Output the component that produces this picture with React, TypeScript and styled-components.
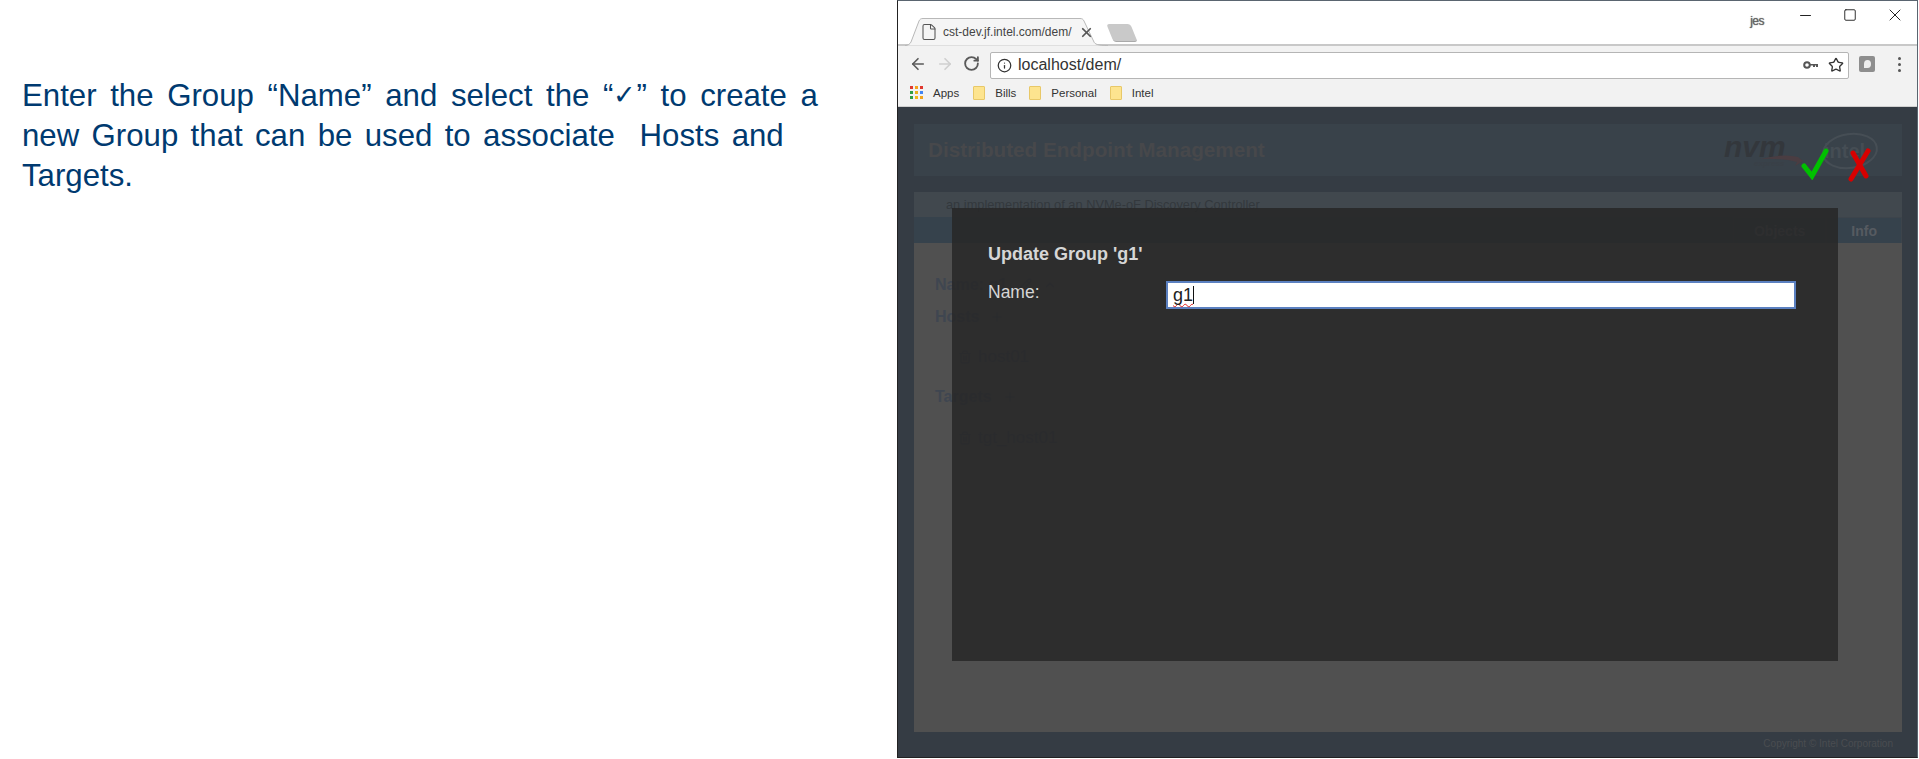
import React from "react";
import styled, { createGlobalStyle } from "styled-components";
import { ArrowLeft, ArrowRight, RotateCw, Info, Star, File, X, Minus, Square, Plus, Trash2, Pencil, ChevronUp } from "lucide-react";

const GlobalStyle = createGlobalStyle`
  html, body { margin: 0; padding: 0; background: #fff; overflow: hidden; }
  body { font-family: "Liberation Sans", Arial, sans-serif; }
`;

const StyledRoot = styled.div`
  width: 1919px;
  height: 759px;
  display: flex;
  background: #fff;
  overflow: hidden;
`;

const StyledNotes = styled.div`
  width: 897px;
  flex: none;
  padding: 75px 0 0 22px;
  box-sizing: border-box;
  color: #003a70;
  font-size: 31.2px;
  line-height: 40px;
`;

const StyledLine = styled.div<{ $spacing: number }>`
  white-space: pre;
  word-spacing: ${(p) => p.$spacing}px;
`;

const StyledCheckGlyph = styled.span`
  font-size: 27px;
  font-weight: normal;
  vertical-align: 2px;
`;

const StyledWindow = styled.div`
  width: 1021px;
  height: 758px;
  border: 1px solid #5a6570;
  border-bottom-color: #222;
  border-left-color: #222;
  box-sizing: border-box;
  display: flex;
  flex-direction: column;
  position: relative;
  background: #fff;
`;

const StyledTabStrip = styled.div`
  height: 45px;
  flex: none;
  display: flex;
  align-items: flex-end;
  padding-left: 7px;
  box-sizing: border-box;
  border-bottom: 2px solid #c8c8c8;
  position: relative;
`;

const StyledTab = styled.div`
  width: 203px;
  height: 28px;
  margin-bottom: -2px;
  flex: none;
  box-sizing: border-box;
  display: flex;
  align-items: center;
  padding-left: 15px;
  font-size: 12px;
  color: #444;
  position: relative;
`;

const StyledTabShape = styled.svg`
  position: absolute;
  left: 0;
  top: 0;
  z-index: 0;
`;

const StyledTabFile = styled(File)`
  flex: none;
  position: relative;
  color: #555;
`;

const StyledTabTitle = styled.span`
  margin: 0 6px 0 5px;
  width: 130px;
  flex: none;
  white-space: nowrap;
  position: relative;
`;

const StyledTabClose = styled(X)`
  flex: none;
  position: relative;
  color: #555;
`;

const StyledNewTab = styled.div`
  width: 24px;
  height: 17px;
  margin: 0 0 2px 2px;
  flex: none;
  background: #c9c9c9;
  border-bottom: 1px solid #aaa;
  border-radius: 3px;
  transform: skewX(22deg);
`;

const StyledWindowControls = styled.div`
  position: absolute;
  top: 4px;
  right: 12px;
  display: flex;
  align-items: center;
  gap: 28.5px;
  color: #222;
`;

const StyledProfile = styled.span`
  position: absolute;
  top: 13px;
  right: 153px;
  font-size: 12px;
  letter-spacing: -0.5px;
  color: #666;
  text-shadow: 0 0 1px #555;
`;

const StyledToolbar = styled.div`
  height: 33px;
  flex: none;
  background: #f2f2f2;
  display: flex;
  align-items: center;
  padding: 0 11px;
  box-sizing: border-box;
  color: #5a5a5a;
`;

const StyledNavIcons = styled.div`
  display: flex;
  align-items: center;
  gap: 9px;
  width: 81px;
  flex: none;
  margin-top: 2px;
`;

const StyledUrlBox = styled.div`
  width: 859px;
  height: 27px;
  flex: none;
  margin-top: 5px;
  box-sizing: border-box;
  background: #fff;
  border: 1px solid #b5b5b5;
  border-radius: 2px;
  display: flex;
  align-items: center;
  padding: 0 4px 0 6px;
  gap: 6px;
  font-size: 16px;
  color: #333;
`;

const StyledUrlText = styled.span`
  flex: 1;
`;

const StyledBookmarkStar = styled(Star)`
  margin-left: 3px;
`;

const StyledExtension = styled.div`
  width: 16px;
  height: 16px;
  margin: 3px 0 0 10px;
  border-radius: 2px;
  background: #8e8e8e;
  display: flex;
  align-items: center;
  justify-content: center;
`;

const StyledExtensionMark = styled.div`
  width: 7px;
  height: 8px;
  background: #eee;
  border-radius: 50% 50% 50% 0;
`;

const StyledMenu = styled.div`
  margin: 3px 0 0 23px;
  display: flex;
  flex-direction: column;
  gap: 3px;
`;

const StyledMenuDot = styled.div`
  width: 3px;
  height: 3px;
  border-radius: 50%;
  background: #555;
`;

const StyledBookmarks = styled.div`
  height: 28px;
  flex: none;
  background: #f2f2f2;
  border-bottom: 1px solid #d0d0d0;
  box-sizing: border-box;
  display: flex;
  align-items: center;
  padding-left: 12px;
  font-size: 11.5px;
  color: #333;
`;

const StyledBookmark = styled.div<{ $gap: number }>`
  display: flex;
  align-items: center;
  gap: 10px;
  margin-right: ${(p) => p.$gap}px;
`;

const StyledAppsGrid = styled.div`
  display: grid;
  grid-template-columns: repeat(3, 3px);
  grid-auto-rows: 3px;
  gap: 2px;
`;

const StyledAppsDot = styled.div<{ $color: string }>`
  background: ${(p) => p.$color};
`;

const StyledFolder = styled.div`
  width: 12px;
  height: 14px;
  background: #fde48f;
  border: 1px solid #e8c868;
  box-sizing: border-box;
  border-radius: 1px;
`;

const StyledPage = styled.div`
  flex: 1;
  background: #353c44;
  padding: 17px 15px 0 16px;
  display: flex;
  flex-direction: column;
  min-height: 0;
`;

const StyledHeader = styled.div`
  height: 52px;
  flex: none;
  background: #39424a;
  display: flex;
  align-items: center;
  padding: 0 14px;
  font-size: 20.7px;
  font-weight: bold;
  color: #47484b;
  position: relative;
`;

const StyledLogoArt = styled.svg`
  position: absolute;
  right: 22px;
  top: 5px;
`;

const StyledSubHeader = styled.div`
  margin-top: 16px;
  height: 25px;
  flex: none;
  background: #41484e;
  padding-left: 32px;
  font-size: 12.8px;
  line-height: 25px;
  color: #33383d;
`;

const StyledTabsRow = styled.div`
  height: 26px;
  flex: none;
  background: #36424c;
  display: flex;
  justify-content: flex-end;
`;

const StyledPageTab = styled.div<{ $active?: boolean }>`
  padding: 0 ${(p) => (p.$active ? 24 : 20)}px;
  font-size: 14px;
  font-weight: bold;
  line-height: 26px;
  color: #565b61;
  border: 1px solid #3d444b;
  border-bottom: none;
`;

const StyledContent = styled.div`
  height: 489px;
  flex: none;
  background: #505050;
  box-sizing: border-box;
  padding: 33px 0 0 21px;
  color: #3f4650;
`;

const StyledContentRow = styled.div<{ $top: number; $indent?: number; $plain?: boolean }>`
  display: flex;
  align-items: center;
  gap: ${(p) => (p.$plain ? 6 : 11)}px;
  margin-top: ${(p) => p.$top}px;
  margin-left: ${(p) => p.$indent || 0}px;
  font-size: ${(p) => (p.$plain ? 17 : 16)}px;
  font-weight: ${(p) => (p.$plain ? "normal" : "bold")};
  line-height: 18px;
`;

const StyledFooter = styled.div`
  flex: 1;
  text-align: right;
  padding: 6px 9px 0 0;
  font-size: 10px;
  color: #4a4d51;
`;

const StyledModal = styled.div`
  position: absolute;
  left: 54px;
  top: 207px;
  width: 886px;
  height: 453px;
  background: rgba(39, 39, 39, 0.85);
  box-sizing: border-box;
  padding: 36px 36px 0;
  color: #d6d6d6;
`;

const StyledModalTitle = styled.div`
  font-size: 18px;
  font-weight: bold;
  line-height: 21px;
`;

const StyledField = styled.div`
  margin-top: 16px;
  display: flex;
  align-items: flex-start;
  font-size: 17.5px;
`;

const StyledFieldLabel = styled.div`
  width: 178px;
  flex: none;
  line-height: 20px;
  margin-top: 1px;
`;

const StyledInput = styled.div`
  width: 630px;
  height: 28px;
  box-sizing: border-box;
  background: #fff;
  border: 2px solid #5b80c0;
  padding-left: 5px;
  font-size: 18px;
  line-height: 24px;
  color: #222;
  display: flex;
`;

const StyledTypo = styled.span`
  text-decoration: underline wavy #e02020 1px;
  text-decoration-skip-ink: none;
  text-underline-offset: 2px;
`;

const StyledCaret = styled.span`
  width: 1px;
  height: 18px;
  margin-top: 3px;
  background: #111;
`;

const StyledActionIcon = styled.svg<{ $left: number }>`
  position: absolute;
  top: 147px;
  left: ${(p) => p.$left}px;
`;

const apps = ["#e0382e", "#f3a41b", "#e0382e", "#2f9e44", "#e8b01b", "#4285f4", "#2f9e44", "#f3b71b", "#f3a41b"];

const KeyIcon = () => (
  <svg width="16" height="10" viewBox="0 0 16 10">
    <circle cx="4" cy="5" r="2.8" fill="none" stroke="#555" strokeWidth="2" />
    <path d="M7 4h8v3h-2V5.5h-1V7h-2V5.5H7z" fill="#555" />
  </svg>
);

const App: React.FC = () => (
  <StyledRoot>
    <GlobalStyle />
    <StyledNotes>
      <StyledLine $spacing={5}>
        Enter the Group “Name” and select the “<StyledCheckGlyph>✓</StyledCheckGlyph>” to create a
      </StyledLine>
      <StyledLine $spacing={3.7}>new Group that can be used to associate  Hosts and</StyledLine>
      <StyledLine $spacing={0}>Targets.</StyledLine>
    </StyledNotes>

    <StyledWindow>
      <StyledTabStrip>
        <StyledTab>
          <StyledTabShape width="203" height="28" viewBox="0 0 203 28">
            <path
              d="M0 27.5C3 27.5 5 26 6 24L14 3C15 1 16 .5 18 .5H175C177 .5 178 1 179 3L189 24C190 26 192 27.5 203 27.5"
              fill="#f5f5f5"
              stroke="#b8b8b8"
            />
          </StyledTabShape>
          <StyledTabFile size={18} strokeWidth={1.4} />
          <StyledTabTitle>cst-dev.jf.intel.com/dem/</StyledTabTitle>
          <StyledTabClose size={15} strokeWidth={2.8} />
        </StyledTab>
        <StyledNewTab />
        <StyledProfile>jes</StyledProfile>
        <StyledWindowControls>
          <Minus size={17} strokeWidth={1.5} />
          <Square size={14} strokeWidth={1.6} />
          <X size={20} strokeWidth={1.2} />
        </StyledWindowControls>
      </StyledTabStrip>

      <StyledToolbar>
        <StyledNavIcons>
          <ArrowLeft size={18} strokeWidth={2.2} />
          <ArrowRight size={18} strokeWidth={2.2} color="#cfcfcf" />
          <RotateCw size={17} strokeWidth={2.6} />
        </StyledNavIcons>
        <StyledUrlBox>
          <Info size={15} strokeWidth={2} />
          <StyledUrlText>localhost/dem/</StyledUrlText>
          <KeyIcon />
          <StyledBookmarkStar size={16} strokeWidth={2} />
        </StyledUrlBox>
        <StyledExtension>
          <StyledExtensionMark />
        </StyledExtension>
        <StyledMenu>
          <StyledMenuDot />
          <StyledMenuDot />
          <StyledMenuDot />
        </StyledMenu>
      </StyledToolbar>

      <StyledBookmarks>
        <StyledBookmark $gap={14}>
          <StyledAppsGrid>
            {apps.map((c, i) => (
              <StyledAppsDot key={i} $color={c} />
            ))}
          </StyledAppsGrid>
          Apps
        </StyledBookmark>
        <StyledBookmark $gap={13}>
          <StyledFolder />
          Bills
        </StyledBookmark>
        <StyledBookmark $gap={13}>
          <StyledFolder />
          Personal
        </StyledBookmark>
        <StyledBookmark $gap={0}>
          <StyledFolder />
          Intel
        </StyledBookmark>
      </StyledBookmarks>

      <StyledPage>
        <StyledHeader>
          Distributed Endpoint Management
          <StyledLogoArt width="170" height="50" viewBox="0 0 170 50">
            <text x="14" y="28" fontFamily="Liberation Sans" fontSize="30" fontWeight="bold" fontStyle="italic" fill="#33373c">
              nvm
            </text>
            <text x="44" y="37" fontFamily="Liberation Sans" fontSize="8" fontStyle="italic" fill="#3a4047">
              express
            </text>
            <path d="M50 30Q75 24 88 28L93 32L85 37L87 33Q72 29 50 30Z" fill="#4a3d42" />
            <ellipse cx="140" cy="22" rx="27" ry="17" fill="none" stroke="#464e55" strokeWidth="2" transform="rotate(-8 140 22)" />
            <text x="114" y="29" fontFamily="Liberation Sans" fontSize="20" fill="#454d54">
              intel
            </text>
          </StyledLogoArt>
        </StyledHeader>
        <StyledSubHeader>an implementation of an NVMe-oF Discovery Controller</StyledSubHeader>
        <StyledTabsRow>
          <StyledPageTab>Objects</StyledPageTab>
          <StyledPageTab $active>Info</StyledPageTab>
        </StyledTabsRow>
        <StyledContent>
          <StyledContentRow $top={0}>
            Name: g1 <Pencil size={14} /> <ChevronUp size={14} />
          </StyledContentRow>
          <StyledContentRow $top={14}>
            Hosts <Plus size={14} />
          </StyledContentRow>
          <StyledContentRow $top={22} $indent={23} $plain>
            <Trash2 size={14} /> host01
          </StyledContentRow>
          <StyledContentRow $top={22}>
            Targets <Plus size={14} />
          </StyledContentRow>
          <StyledContentRow $top={23} $indent={23} $plain>
            <Trash2 size={14} /> tgt_host01
          </StyledContentRow>
        </StyledContent>
        <StyledFooter>Copyright © Intel Corporation</StyledFooter>
      </StyledPage>

      <StyledModal>
        <StyledModalTitle>Update Group 'g1'</StyledModalTitle>
        <StyledField>
          <StyledFieldLabel>Name:</StyledFieldLabel>
          <StyledInput>
            <StyledTypo>g1</StyledTypo>
            <StyledCaret />
          </StyledInput>
        </StyledField>
      </StyledModal>

      <StyledActionIcon $left={903} width="30" height="32" viewBox="0 0 30 32">
        <path d="M3 18l8 10L25 3" fill="none" stroke="#00c000" strokeWidth="5" strokeLinecap="round" />
      </StyledActionIcon>
      <StyledActionIcon $left={948} width="26" height="36" viewBox="0 0 26 36">
        <path d="M22 3L5 31M7 5l13 23" fill="none" stroke="#d80000" strokeWidth="5" strokeLinecap="round" />
      </StyledActionIcon>
    </StyledWindow>
  </StyledRoot>
);

export default App;
